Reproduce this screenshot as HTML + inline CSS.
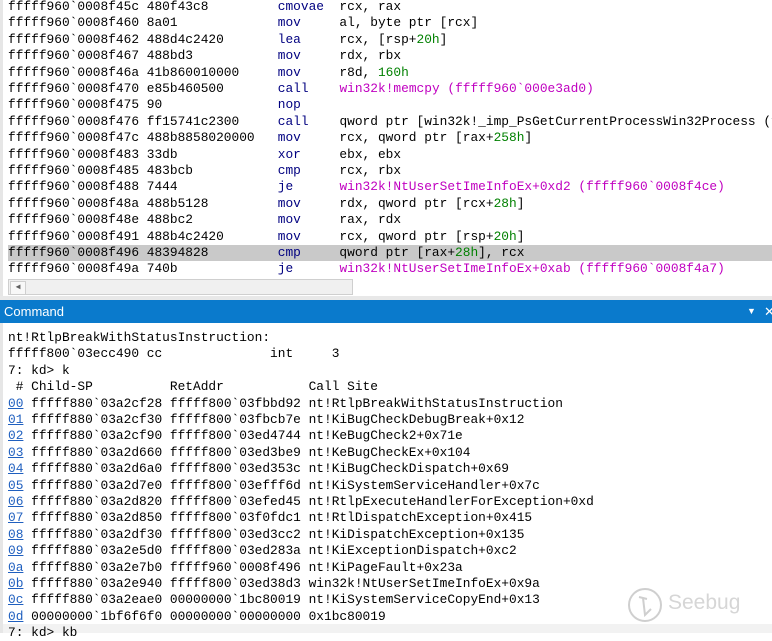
<!DOCTYPE html>
<html><head><meta charset="utf-8"><style>
body{margin:0;width:772px;height:633px;overflow:hidden;background:#fff;position:relative;font-family:"Liberation Mono","DejaVu Sans Mono",monospace;font-size:12.85px;color:#000}
.l{position:absolute;left:8px;right:0;overflow:hidden;white-space:pre;line-height:16.4px;height:16.4px}
.m{color:#000080}.g{color:#008000}.p{color:#c000c0}
.u{color:#1f5fbf;text-decoration:underline}
.hl{background:#c9c9c9}
</style></head><body>
<div style="position:absolute;left:0;top:0;width:3px;height:296px;background:#e6e6e6"></div>
<div class="l" style="top:-1px">fffff960`0008f45c 480f43c8         <span class="m">cmovae</span>  rcx, rax</div>
<div class="l" style="top:15.4px">fffff960`0008f460 8a01             <span class="m">mov</span>     al, byte ptr [rcx]</div>
<div class="l" style="top:31.8px">fffff960`0008f462 488d4c2420       <span class="m">lea</span>     rcx, [rsp+<span class="g">20h</span>]</div>
<div class="l" style="top:48.2px">fffff960`0008f467 488bd3           <span class="m">mov</span>     rdx, rbx</div>
<div class="l" style="top:64.6px">fffff960`0008f46a 41b860010000     <span class="m">mov</span>     r8d, <span class="g">160h</span></div>
<div class="l" style="top:81px">fffff960`0008f470 e85b460500       <span class="m">call</span>    <span class="p">win32k!memcpy (fffff960`000e3ad0)</span></div>
<div class="l" style="top:97.4px">fffff960`0008f475 90               <span class="m">nop</span></div>
<div class="l" style="top:113.8px">fffff960`0008f476 ff15741c2300     <span class="m">call</span>    qword ptr [win32k!_imp_PsGetCurrentProcessWin32Process (f</div>
<div class="l" style="top:130.2px">fffff960`0008f47c 488b8858020000   <span class="m">mov</span>     rcx, qword ptr [rax+<span class="g">258h</span>]</div>
<div class="l" style="top:146.6px">fffff960`0008f483 33db             <span class="m">xor</span>     ebx, ebx</div>
<div class="l" style="top:163px">fffff960`0008f485 483bcb           <span class="m">cmp</span>     rcx, rbx</div>
<div class="l" style="top:179.4px">fffff960`0008f488 7444             <span class="m">je</span>      <span class="p">win32k!NtUserSetImeInfoEx+0xd2 (fffff960`0008f4ce)</span></div>
<div class="l" style="top:195.8px">fffff960`0008f48a 488b5128         <span class="m">mov</span>     rdx, qword ptr [rcx+<span class="g">28h</span>]</div>
<div class="l" style="top:212.2px">fffff960`0008f48e 488bc2           <span class="m">mov</span>     rax, rdx</div>
<div class="l" style="top:228.6px">fffff960`0008f491 488b4c2420       <span class="m">mov</span>     rcx, qword ptr [rsp+<span class="g">20h</span>]</div>
<div class="l hl" style="top:245px">fffff960`0008f496 48394828         <span class="m">cmp</span>     qword ptr [rax+<span class="g">28h</span>], rcx</div>
<div class="l" style="top:261.4px">fffff960`0008f49a 740b             <span class="m">je</span>      <span class="p">win32k!NtUserSetImeInfoEx+0xab (fffff960`0008f4a7)</span></div>
<div style="position:absolute;left:8px;top:279px;width:343px;height:14px;background:#f0f0f0;border:1px solid #cfcfcf"></div>
<div style="position:absolute;left:10px;top:281px;width:14px;height:12px;background:#f8f8f8;border:1px solid #cfcfcf;color:#606060;font-size:8px;line-height:12px;text-align:center">◀</div>
<div style="position:absolute;left:0;top:296px;width:772px;height:4px;background:#e8e8e8"></div>
<div style="position:absolute;left:0;top:300px;width:772px;height:23px;background:#0a7acc;color:#fff;font-family:'Liberation Sans','DejaVu Sans',sans-serif;font-size:13px;line-height:23px;padding-left:4px;box-sizing:border-box;overflow:hidden">Command<span style="position:absolute;left:747px;font-size:9px">▼</span><span style="position:absolute;left:764px">✕</span></div>
<div style="position:absolute;left:0;top:323px;width:3px;height:310px;background:#e6e6e6"></div>
<div class="l" style="top:330px">nt!RtlpBreakWithStatusInstruction:</div>
<div class="l" style="top:346.4px">fffff800`03ecc490 cc              int     3</div>
<div class="l" style="top:362.8px">7: kd&gt; k</div>
<div class="l" style="top:379.2px"> # Child-SP          RetAddr           Call Site</div>
<div class="l" style="top:395.6px"><span class="u">00</span> fffff880`03a2cf28 fffff800`03fbbd92 nt!RtlpBreakWithStatusInstruction</div>
<div class="l" style="top:412px"><span class="u">01</span> fffff880`03a2cf30 fffff800`03fbcb7e nt!KiBugCheckDebugBreak+0x12</div>
<div class="l" style="top:428.4px"><span class="u">02</span> fffff880`03a2cf90 fffff800`03ed4744 nt!KeBugCheck2+0x71e</div>
<div class="l" style="top:444.8px"><span class="u">03</span> fffff880`03a2d660 fffff800`03ed3be9 nt!KeBugCheckEx+0x104</div>
<div class="l" style="top:461.2px"><span class="u">04</span> fffff880`03a2d6a0 fffff800`03ed353c nt!KiBugCheckDispatch+0x69</div>
<div class="l" style="top:477.6px"><span class="u">05</span> fffff880`03a2d7e0 fffff800`03efff6d nt!KiSystemServiceHandler+0x7c</div>
<div class="l" style="top:494px"><span class="u">06</span> fffff880`03a2d820 fffff800`03efed45 nt!RtlpExecuteHandlerForException+0xd</div>
<div class="l" style="top:510.4px"><span class="u">07</span> fffff880`03a2d850 fffff800`03f0fdc1 nt!RtlDispatchException+0x415</div>
<div class="l" style="top:526.8px"><span class="u">08</span> fffff880`03a2df30 fffff800`03ed3cc2 nt!KiDispatchException+0x135</div>
<div class="l" style="top:543.2px"><span class="u">09</span> fffff880`03a2e5d0 fffff800`03ed283a nt!KiExceptionDispatch+0xc2</div>
<div class="l" style="top:559.6px"><span class="u">0a</span> fffff880`03a2e7b0 fffff960`0008f496 nt!KiPageFault+0x23a</div>
<div class="l" style="top:576px"><span class="u">0b</span> fffff880`03a2e940 fffff800`03ed38d3 win32k!NtUserSetImeInfoEx+0x9a</div>
<div class="l" style="top:592.4px"><span class="u">0c</span> fffff880`03a2eae0 00000000`1bc80019 nt!KiSystemServiceCopyEnd+0x13</div>
<div class="l" style="top:608.8px"><span class="u">0d</span> 00000000`1bf6f6f0 00000000`00000000 0x1bc80019</div>
<div style="position:absolute;left:3px;top:624px;width:769px;height:9px;background:#f2f2f2"></div>
<div class="l" style="top:625px">7: kd&gt; kb</div>
<svg style="position:absolute;left:625px;top:585px" width="40" height="40" viewBox="0 0 40 40"><circle cx="20" cy="20" r="16" fill="none" stroke="#cfcfcf" stroke-width="2"/><path d="M14 12 L22 14 M18 13 L20 30 L26 24" fill="none" stroke="#cfcfcf" stroke-width="2"/></svg>
<div style="position:absolute;left:668px;top:591px;font-family:'Liberation Sans',sans-serif;font-size:21px;color:#d6d6d6">Seebug</div>
</body></html>
